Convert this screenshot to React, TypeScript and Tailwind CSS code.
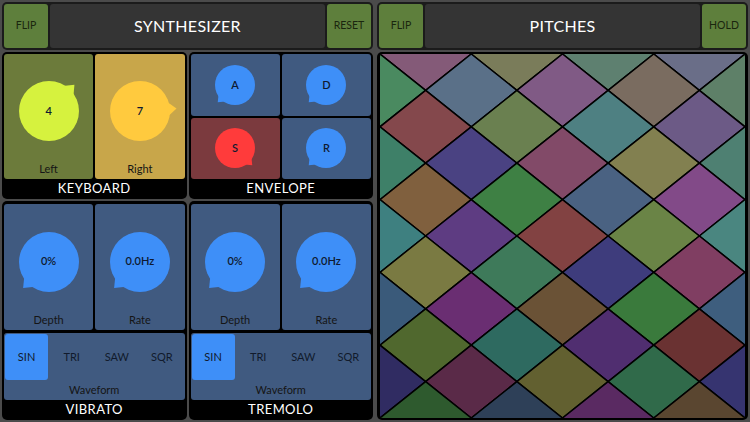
import React from 'react';

// colours per diamond row (v), listed by u ascending (u + v odd)
const gridColors: string[][] = [
    ['#845a78', '#7a7c5a', '#5e8070', '#6a6e88'],
    ['#4a8a60', '#5a7088', '#805a85', '#7a6c60', '#5e8068'],
    ['#84484c', '#6a8050', '#4e8082', '#6c5a86'],
    ['#3e8068', '#4a4282', '#824a68', '#828050', '#4e8072'],
    ['#80603e', '#3e8044', '#4a6282', '#824a88'],
    ['#3e8080', '#5e3c82', '#824242', '#6a8446', '#4a8680'],
    ['#7a7a42', '#3e7a5a', '#3e3c7c', '#803e62'],
    ['#3a5a7a', '#6a2e72', '#6a5236', '#3a7a3c', '#3e5e7e'],
    ['#50682e', '#2e6a60', '#502e70', '#6a3232'],
    ['#302c62', '#5a2a48', '#626030', '#306a4a', '#363470'],
    ['#2e5a2e', '#2e4058', '#5a2a62', '#5a4630'],
];

function PitchGrid() {
    const W = 366;
    const H = 364;
    const du = W / 8;
    const dv = H / 10;
    const cells: React.ReactNode[] = [];
    gridColors.forEach((row, v) => {
        const start = v % 2 === 0 ? 1 : 0;
        row.forEach((color, i) => {
            const u = start + i * 2;
            const x = u * du;
            const y = v * dv;
            const pts = `${x - du},${y} ${x},${y - dv} ${x + du},${y} ${x},${y + dv}`;
            cells.push(<polygon key={`${u}-${v}`} points={pts} fill={color} stroke="#000" strokeWidth={1.5} strokeLinejoin="round" />);
        });
    });
    return (
        <svg viewBox={`0 0 ${W} ${H}`} preserveAspectRatio="none" className="block w-full h-full">
            {cells}
        </svg>
    );
}

interface KnobProps {
    r: number;
    color: string;
    angle: number;
    value: string;
}

function Knob({ r, color, angle, value }: KnobProps) {
    const s = Math.ceil(r * 2.6);
    const c = s / 2;
    const pt = (a: number, rad: number) => {
        const t = (a * Math.PI) / 180;
        return `${c + rad * Math.cos(t)},${c + rad * Math.sin(t)}`;
    };
    const tail = [pt(angle - 15, r * 0.95), pt(angle, r * 1.22), pt(angle + 15, r * 0.95)].join(' ');
    return (
        <div className="grid place-items-center">
            <svg width={s} height={s} className="col-start-1 row-start-1">
                <circle cx={c} cy={c} r={r} fill={color} />
                <polygon points={tail} fill={color} />
            </svg>
            <span className="col-start-1 row-start-1 text-[11px] font-semibold text-[#0f1a30]">{value}</span>
        </div>
    );
}

function KnobCell({ bg, knob, label }: { bg: string; knob: React.ReactNode; label: string }) {
    return (
        <div className={`flex-1 flex flex-col rounded-[3px] ${bg}`}>
            <div className="flex-1 flex items-center justify-center pt-[9px]">{knob}</div>
            <div className="h-[20px] flex items-center justify-center text-[11px] text-[#151515]">{label}</div>
        </div>
    );
}

function Header({ title, right }: { title: string; right: string }) {
    return (
        <div className="h-[48px] flex gap-[2px] p-[2px] bg-[#1b1b1b] rounded-[5px]">
            <button className="w-[44px] rounded-[3px] bg-[#5e7f3c] text-[10.5px] text-[#1a260e]">FLIP</button>
            <div className="flex-1 flex items-center justify-center rounded-[3px] bg-[#343434] text-white text-[16px] tracking-[0.3px]">
                {title}
            </div>
            <button className="w-[44px] rounded-[3px] bg-[#5e7f3c] text-[10.5px] text-[#1a260e]">{right}</button>
        </div>
    );
}

function ModuleLabel({ label }: { label: string }) {
    return (
        <div className="h-[20px] flex items-center justify-center text-white text-[13px] tracking-[0.4px]">{label}</div>
    );
}

function Waveform() {
    const options = ['SIN', 'TRI', 'SAW', 'SQR'];
    return (
        <div className="h-[67px] flex flex-col rounded-[3px] bg-[#405a80]">
            <div className="h-[48px] grid grid-cols-4">
                {options.map((o, i) => (
                    <div key={o} className="p-[1px]">
                        <div className={`h-full flex items-center justify-center rounded-[3px] text-[11px] text-[#111a2c] ${i === 0 ? 'bg-[#3e8ff8]' : ''}`}>
                            {o}
                        </div>
                    </div>
                ))}
            </div>
            <div className="flex-1 flex items-center justify-center text-[11px] text-[#151515]">Waveform</div>
        </div>
    );
}

function LfoModule({ label }: { label: string }) {
    return (
        <div className="flex-1 flex flex-col bg-black rounded-[5px] px-[2px] pt-[3px]">
            <div className="flex-1 flex flex-col gap-[3px]">
                <div className="flex-1 flex gap-[2px]">
                    <KnobCell bg="bg-[#405a80]" label="Depth" knob={<Knob r={30} color="#3e8ff8" angle={135} value="0%" />} />
                    <KnobCell bg="bg-[#405a80]" label="Rate" knob={<Knob r={30} color="#3e8ff8" angle={135} value="0.0Hz" />} />
                </div>
                <Waveform />
            </div>
            <ModuleLabel label={label} />
        </div>
    );
}

export default function App() {
    const envelope = [
        { key: 'A', bg: 'bg-[#405a80]', color: '#3e8ff8', angle: 135 },
        { key: 'D', bg: 'bg-[#405a80]', color: '#3e8ff8', angle: 135 },
        { key: 'S', bg: 'bg-[#7b3a3e]', color: '#ff3b3b', angle: 45 },
        { key: 'R', bg: 'bg-[#405a80]', color: '#3e8ff8', angle: 135 },
    ];

    return (
        <div className="w-[750px] h-[422px] flex gap-[4px] p-[2px] bg-[#4b4b4b] font-['Lato',sans-serif] overflow-hidden">
            {/* Synthesizer */}
            <div className="w-[371px] flex flex-col gap-[2px]">
                <Header title="SYNTHESIZER" right="RESET" />

                <div className="h-[147px] flex gap-[2px]">
                    <div className="flex-1 flex flex-col bg-black rounded-[5px] px-[2px] pt-[2px]">
                        <div className="flex-1 flex gap-[2px]">
                            <KnobCell bg="bg-[#6c7b3b]" label="Left" knob={<Knob r={30} color="#d6f23e" angle={-46} value="4" />} />
                            <KnobCell bg="bg-[#c8a64a]" label="Right" knob={<Knob r={30} color="#ffca3e" angle={-4} value="7" />} />
                        </div>
                        <ModuleLabel label="KEYBOARD" />
                    </div>
                    <div className="flex-1 flex flex-col bg-black rounded-[5px] px-[2px] pt-[2px]">
                        <div className="flex-1 grid grid-cols-2 grid-rows-2 gap-[2px]">
                            {envelope.map(e => (
                                <div key={e.key} className={`flex items-center justify-center rounded-[3px] ${e.bg}`}>
                                    <Knob r={20} color={e.color} angle={e.angle} value={e.key} />
                                </div>
                            ))}
                        </div>
                        <ModuleLabel label="ENVELOPE" />
                    </div>
                </div>

                <div className="flex-1 flex gap-[2px]">
                    <LfoModule label="VIBRATO" />
                    <LfoModule label="TREMOLO" />
                </div>
            </div>

            {/* Pitches */}
            <div className="flex-1 flex flex-col gap-[2px]">
                <Header title="PITCHES" right="HOLD" />
                <div className="flex-1 bg-black rounded-[5px] px-[3px] py-[2px]">
                    <div className="w-full h-full rounded-[3px] overflow-hidden">
                        <PitchGrid />
                    </div>
                </div>
            </div>
        </div>
    );
}
